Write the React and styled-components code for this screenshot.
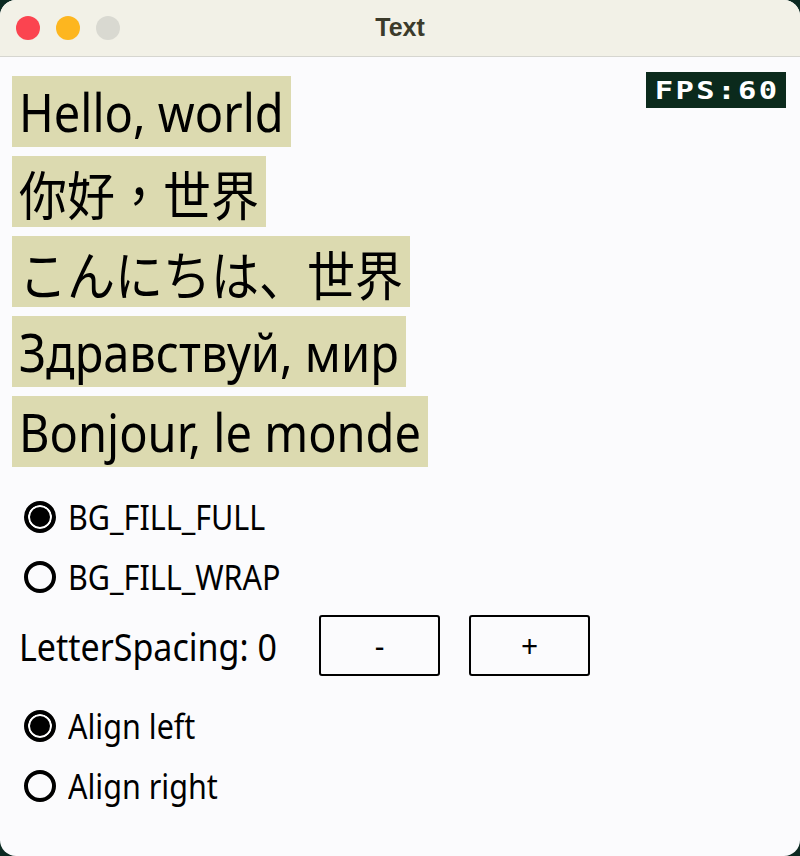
import React, { useState } from 'react'
import styled, { createGlobalStyle } from 'styled-components'

const samples = [
    { text: 'Hello, world', cjk: false },
    { text: '你好，世界', cjk: 'tc' },
    { text: 'こんにちは、世界', cjk: 'jp' },
    { text: 'Здравствуй, мир', cjk: false },
    { text: 'Bonjour, le monde', cjk: false },
]

function TitleBar() {
    return (
        <Bar>
            <Lights>
                <Light color="#fb4450" />
                <Light color="#fdb61f" />
                <Light color="#d9d9d1" />
            </Lights>
            <Title>Text</Title>
            <span />
        </Bar>
    )
}

function Radio({ checked, label, onClick }) {
    return (
        <RadioRow onClick={onClick}>
            <Circle checked={checked} />
            <Label>{label}</Label>
        </RadioRow>
    )
}

export default function App() {
    const [fill, setFill] = useState('full')
    const [align, setAlign] = useState('left')
    const [spacing, setSpacing] = useState(0)

    return (
        <>
            <GlobalStyle />
            <Window>
                <TitleBar />
                <Content>
                    <Fps><FpsText>FPS:60</FpsText></Fps>
                    <SampleList>
                        {samples.map((s, index) => (
                            <Sample key={index} cjk={s.cjk}>
                                <Stretch>{s.text}</Stretch>
                            </Sample>
                        ))}
                    </SampleList>
                    <Controls>
                        <Radio checked={fill === 'full'} label="BG_FILL_FULL" onClick={() => setFill('full')} />
                        <Radio checked={fill === 'wrap'} label="BG_FILL_WRAP" onClick={() => setFill('wrap')} />
                        <SpacingRow>
                            <SpacingLabel><Stretch>LetterSpacing: {spacing}</Stretch></SpacingLabel>
                            <StepButton onClick={() => setSpacing(spacing - 1)}>-</StepButton>
                            <StepButton onClick={() => setSpacing(spacing + 1)}>+</StepButton>
                        </SpacingRow>
                        <Radio checked={align === 'left'} label="Align left" onClick={() => setAlign('left')} />
                        <Radio checked={align === 'right'} label="Align right" onClick={() => setAlign('right')} />
                    </Controls>
                </Content>
            </Window>
        </>
    )
}

const GlobalStyle = createGlobalStyle`
html, body {
    margin: 0;
    padding: 0;
    background: #0c2a22;
}
`

const Window = styled.div`
    height: 856px;
    width: 800px;
    border-radius: 16px;
    overflow: hidden;
    background: #fbfbfd;
    display: flex;
    flex-direction: column;
`

const Bar = styled.div`
    height: 56px;
    flex-shrink: 0;
    display: grid;
    grid-template-columns: 1fr auto 1fr;
    align-items: center;
    background: #f2f1e7;
    border-bottom: 1px solid #d6d6d0;
    padding: 0 16px;
`

const Lights = styled.div`
    display: flex;
    gap: 16px;
`

const Light = styled.span`
    width: 24px;
    height: 24px;
    border-radius: 50%;
    background: ${props => props.color};
`

const Title = styled.div`
    font-family: "Liberation Sans", Arial, sans-serif;
    font-weight: bold;
    font-size: 25px;
    color: #3b3b2b;
    margin-top: -2px;
`

const Content = styled.div`
    position: relative;
    padding: 19px 12px 0 12px;
    font-family: "Noto Sans", sans-serif;
    color: #000;
`

const Fps = styled.div`
    position: absolute;
    top: 15px;
    right: 14px;
    width: 140px;
    height: 36px;
    background: #0b2a1c;
    display: flex;
    align-items: center;
    justify-content: center;
`

const FpsText = styled.span`
    display: inline-block;
    color: #fff;
    font-family: "DejaVu Sans Mono", monospace;
    font-weight: bold;
    font-size: 25px;
    letter-spacing: 2px;
    margin-right: -2px;
    transform: scaleX(1.22);
`

const SampleList = styled.div`
    display: flex;
    flex-direction: column;
    align-items: flex-start;
    gap: 9px;
`

const Sample = styled.div`
    height: 71px;
    display: flex;
    align-items: center;
    padding: 0 7px;
    background: #dcdab0;
    font-size: ${props => (props.cjk ? '48px' : '47px')};
    font-family: ${props =>
        props.cjk === 'tc' ? '"Noto Sans CJK TC"' : props.cjk === 'jp' ? '"Noto Sans CJK JP"' : '"Noto Sans"'}, sans-serif;
    white-space: nowrap;
`

const Stretch = styled.span`
    display: inline-block;
    transform: scaleY(1.12);
`

const Controls = styled.div`
    margin-top: 20px;
    display: flex;
    flex-direction: column;
`

const RadioRow = styled.div`
    height: 60px;
    display: flex;
    align-items: center;
    gap: 12px;
    padding-left: 12px;
    cursor: pointer;
`

const Circle = styled.span`
    box-sizing: border-box;
    width: 32px;
    height: 32px;
    border-radius: 50%;
    border: 4px solid #000;
    background: ${props => (props.checked ? '#000' : 'transparent')};
    box-shadow: ${props => (props.checked ? 'inset 0 0 0 2px #fff' : 'none')};
`

const Label = styled(Stretch)`
    font-size: 30.5px;
`

const SpacingRow = styled.div`
    display: flex;
    align-items: center;
    margin: 8px 0 20px;
    padding-left: 7px;
`

const SpacingLabel = styled.div`
    font-size: 34px;
    width: 300px;
`

const StepButton = styled.button`
    width: 121px;
    height: 61px;
    margin-right: 29px;
    border: 2px solid #000;
    border-radius: 3px;
    background: transparent;
    font-family: "Noto Sans", sans-serif;
    font-size: 30px;
    color: #000;
    padding: 0;
`
